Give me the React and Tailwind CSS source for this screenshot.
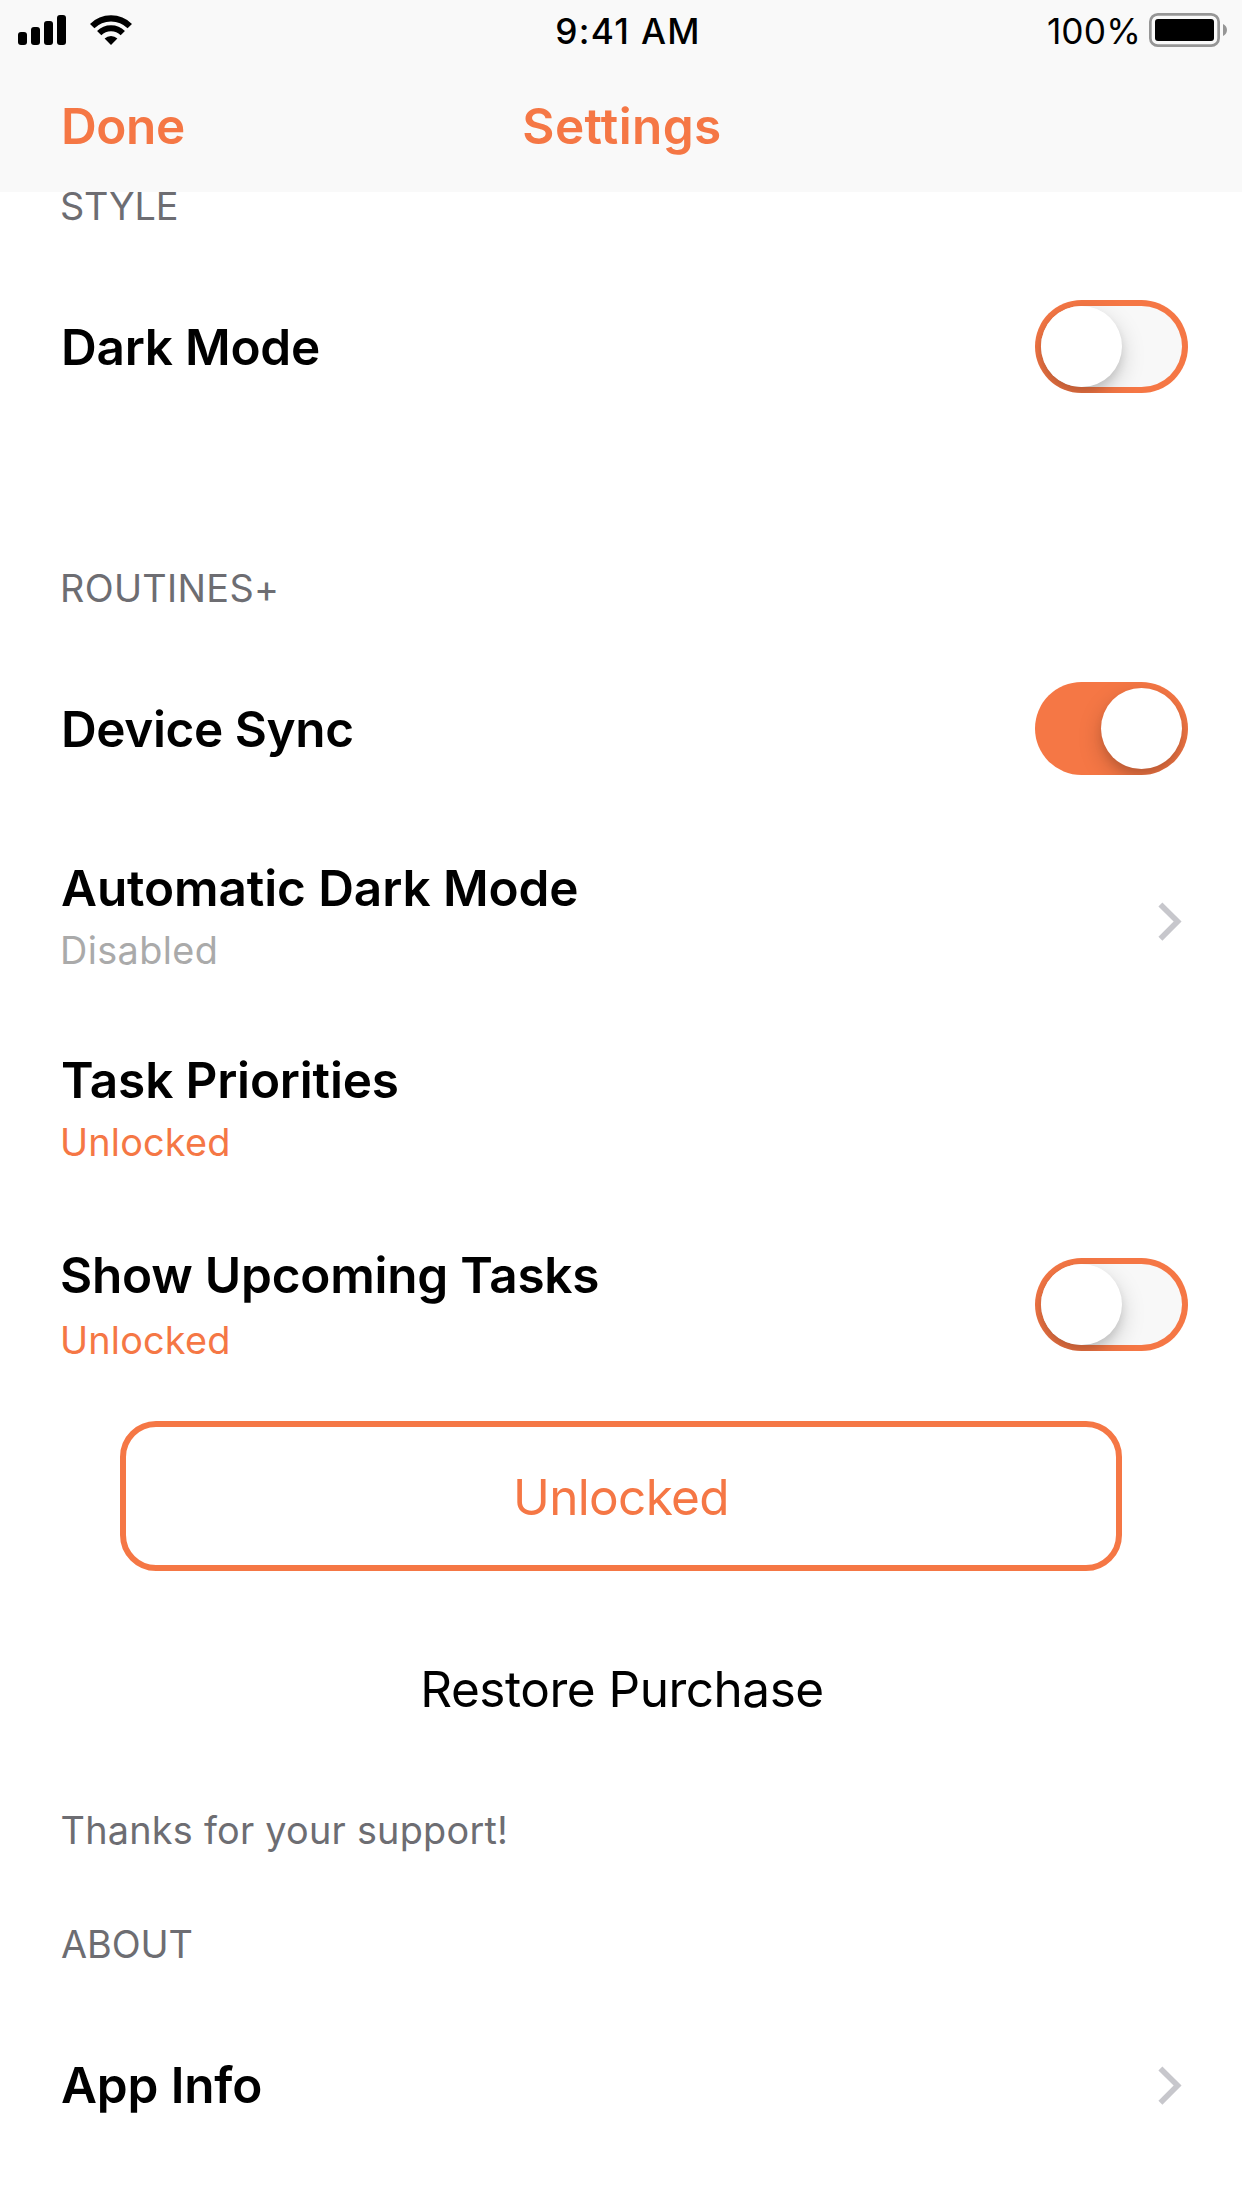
function SignalBars() {
  return (
    <svg width="48" height="30" viewBox="0 0 48 30" className="mt-[15px] ml-[18px]" fill="#000">
      <rect x="0" y="17" width="9" height="13" rx="3" />
      <rect x="13" y="12" width="9" height="18" rx="3" />
      <rect x="26" y="6" width="9" height="24" rx="3" />
      <rect x="39" y="0" width="9" height="30" rx="3" />
    </svg>
  );
}

function Wifi() {
  return (
    <svg width="42" height="30" viewBox="0 0 42 30" className="mt-[15px] ml-6" fill="none">
      <path d="M2.2 11.1 A26.6 26.6 0 0 1 39.8 11.1" stroke="#000" strokeWidth="6.2" />
      <path d="M9.2 18.2 A16.6 16.6 0 0 1 32.8 18.2" stroke="#000" strokeWidth="6" />
      <path d="M21 30 L14.6 23.6 A9.1 9.1 0 0 1 27.4 23.6 Z" fill="#000" />
    </svg>
  );
}

function Battery() {
  return (
    <svg width="78" height="34" viewBox="0 0 78 34" className="mt-[13px] ml-[9px]" fill="none">
      <rect x="1.35" y="1.35" width="68.3" height="31.3" rx="7.5" stroke="#969696" strokeWidth="2.7" />
      <rect x="6" y="6" width="59" height="22" rx="3" fill="#000" />
      <path d="M74 11 C76.2 12 78 14.2 78 17 C78 19.8 76.2 22 74 23 Z" fill="#969696" />
    </svg>
  );
}

function Chevron({ className }) {
  return (
    <svg width="24" height="40" viewBox="0 0 24 40" className={className} fill="none">
      <path d="M2.4 2.4 L19.6 19.6 L2.4 36.8" stroke="#c7c7cc" strokeWidth="5.6" />
    </svg>
  );
}

/* The ring is the outer track's padding, so the knob's shadow falls on it as well. */
function Switch({ on, className = "" }) {
  return (
    <div className={`h-[93px] w-[153px] shrink-0 overflow-hidden rounded-full bg-[#f57745] p-1.5 ${className}`}>
      <div className={`flex h-[81px] rounded-full ${on ? "justify-end" : "bg-[#f8f8f8]"}`}>
        <div className="size-[81px] rounded-full bg-white shadow-[0_9px_24px_rgba(0,0,0,0.18),0_6px_8px_rgba(0,0,0,0.1)]" />
      </div>
    </div>
  );
}

function Title({ children, className = "" }) {
  return (
    <div className={`text-[49.5px] leading-[60px] font-semibold whitespace-nowrap text-black ${className}`}>
      {children}
    </div>
  );
}

function Caption({ children, className = "" }) {
  return <div className={`text-[37.8px] whitespace-nowrap ${className}`}>{children}</div>;
}

export default function App() {
  return (
    <div className="h-[2208px] w-[1242px] overflow-hidden bg-white font-[Inter,sans-serif]">
      <header className="h-48 bg-[#f9f9f9]">
        <div className="grid h-[60px] grid-cols-3">
          <div className="flex">
            <SignalBars />
            <Wifi />
          </div>
          <div className="mt-2.5 pl-[14px] text-center text-[35.3px] leading-[43px] font-medium tracking-[1.29px] text-black">
            9:41 AM
          </div>
          <div className="flex justify-end pr-[15px]">
            <div className="mt-2.5 -mr-px text-[35.3px] leading-[43px] tracking-[0.14px] text-black">100%</div>
            <Battery />
          </div>
        </div>
        <nav className="grid h-[132px] grid-cols-3 items-center px-[61px] text-[49.5px] leading-[60px] font-semibold text-[#f57745]">
          <div className="tracking-[-0.39px]">Done</div>
          <div className="pl-0.5 text-center tracking-[0.38px]">Settings</div>
        </nav>
      </header>

      <main className="flex flex-col pr-[54px] pl-[60px]">
        <Caption className="leading-7 tracking-[-0.18px] text-[#6d6d72]">STYLE</Caption>
        <div className="mt-20 flex items-start justify-between">
          <Title className="mt-[17px] ml-px tracking-[-0.24px]">Dark Mode</Title>
          <Switch />
        </div>

        <Caption className="mt-[172px] leading-[46px] tracking-[0.33px] text-[#6d6d72]">ROUTINES+</Caption>
        <div className="mt-[71px] flex items-start justify-between">
          <Title className="mt-[17px] ml-px tracking-[-0.41px]">Device Sync</Title>
          <Switch on />
        </div>

        <div className="mt-[83px] flex items-start justify-between">
          <div>
            <Title className="ml-px tracking-[-0.1px]">Automatic Dark Mode</Title>
            <Caption className="mt-[9px] leading-[46px] tracking-[0.4px] text-[#aaaaaa]">Disabled</Caption>
          </div>
          <Chevron className="mt-11 mr-1.5" />
        </div>

        <div className="mt-[77px]">
          <Title className="ml-px tracking-[-0.18px]">Task Priorities</Title>
          <Caption className="mt-[9px] leading-[46px] tracking-[0.2px] text-[#f57745]">Unlocked</Caption>
        </div>

        <div className="mt-20 flex items-start justify-between">
          <div>
            <Title className="tracking-[-0.22px]">Show Upcoming Tasks</Title>
            <Caption className="mt-3 leading-[46px] tracking-[0.2px] text-[#f57745]">Unlocked</Caption>
          </div>
          <Switch className="mt-[13px]" />
        </div>

        <button className="mt-[58px] ml-[60px] flex h-[150px] w-[1002px] items-start justify-center rounded-[36px] border-6 border-[#f57745] pt-10 text-[49.5px] leading-[60px] tracking-[-0.66px] text-[#f57745]">
          Unlocked
        </button>
        <button className="mt-[88px] ml-[60px] w-[1002px] pl-0.5 text-center text-[49.5px] leading-[60px] tracking-[-0.49px] text-black">
          Restore Purchase
        </button>

        <Caption className="mt-[88px] ml-[0.5px] leading-[46px] tracking-[0.25px] text-[#6d6d72]">
          Thanks for your support!
        </Caption>
        <Caption className="mt-[68px] ml-px leading-[46px] tracking-[-0.08px] text-[#6d6d72]">ABOUT</Caption>
        <div className="mt-[88px] flex items-start justify-between">
          <Title className="ml-px tracking-[-0.15px]">App Info</Title>
          <Chevron className="mt-[11px] mr-1.5" />
        </div>
      </main>
    </div>
  );
}
